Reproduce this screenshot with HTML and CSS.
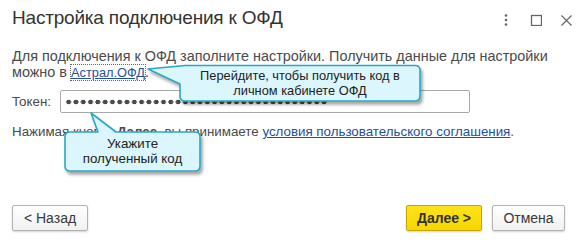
FILE: index.html
```html
<!DOCTYPE html>
<html lang="ru">
<head>
<meta charset="utf-8">
<title>Настройка подключения к ОФД</title>
<link rel="stylesheet" href="styles.css">
</head>
<body>
<div class="dialog">
  <div class="header">
    <div class="title">Настройка подключения к ОФД</div>
    <div class="win-icons">
      <svg class="ico" width="12" height="12" viewBox="0 0 12 12"><circle cx="6" cy="1.5" r="1.3" fill="#666"/><circle cx="6" cy="6" r="1.3" fill="#666"/><circle cx="6" cy="10.5" r="1.3" fill="#666"/></svg>
      <svg class="ico" width="12" height="12" viewBox="0 0 12 12"><rect x="1.5" y="1.5" width="10" height="10" fill="none" stroke="#666" stroke-width="1.3"/></svg>
      <svg class="ico" width="12" height="12" viewBox="0 0 12 12"><path d="M1.5 1.5 L11.5 11.5 M11.5 1.5 L1.5 11.5" stroke="#666" stroke-width="1.2" fill="none"/></svg>
    </div>
  </div>
  <div class="content">
    <p class="intro">Для подключения к ОФД заполните настройки. Получить данные для настройки можно в <a class="link focused" href="#">Астрал.ОФД</a>.</p>
    <div class="token-row">
      <span class="label">Токен:</span>
      <div class="field"><span class="dots"></span></div>
    </div>
    <p class="terms">Нажимая кнопку <b>Далее</b>, вы принимаете <a class="link" href="#">условия пользовательского соглашения</a>.</p>
  </div>
  <div class="footer">
    <button class="btn">&lt; Назад</button>
    <div class="right-btns">
      <button class="btn btn-primary">Далее &gt;</button>
      <button class="btn btn-cancel">Отмена</button>
    </div>
  </div>

  <div class="callout callout-1">
    <svg class="callout-bg" width="290" height="50" viewBox="0 0 290 50">
      <defs><filter id="sh1" x="-10%" y="-20%" width="120%" height="150%"><feDropShadow dx="2" dy="3" stdDeviation="1.5" flood-color="#000" flood-opacity="0.35"/></filter></defs>
      <path d="M3 7 L40 3.5 H270 Q275 3.5 275 8.5 V34 Q275 39 270 39 H40 Q35 39 35 34 V22 Z" fill="#dbf6fc" stroke="#2ba6c6" stroke-width="1.6" stroke-linejoin="round" filter="url(#sh1)"/>
    </svg>
    <div class="callout-text">Перейдите, чтобы получить код в<br>личном кабинете ОФД</div>
  </div>

  <div class="callout callout-2">
    <svg class="callout-bg" width="150" height="72" viewBox="0 0 150 72">
      <defs><filter id="sh2" x="-10%" y="-10%" width="130%" height="130%"><feDropShadow dx="2" dy="3" stdDeviation="1.5" flood-color="#000" flood-opacity="0.35"/></filter></defs>
      <path d="M31 5 L56 24 H135 Q140 24 140 29 V58 Q140 63 135 63 H10 Q5 63 5 58 V29 Q5 24 10 24 H38 Z" fill="#dbf6fc" stroke="#2ba6c6" stroke-width="1.6" stroke-linejoin="round" filter="url(#sh2)"/>
    </svg>
    <div class="callout-text">Укажите<br>полученный код</div>
  </div>
</div>
</body>
</html>
```

FILE: styles.css
```css
* { box-sizing: border-box; }
html, body { margin: 0; padding: 0; background: #fff; }
body { width: 585px; height: 244px; overflow: hidden; font-family: "Liberation Sans", Arial, sans-serif; color: #4a4a4a; }

.dialog { position: relative; width: 585px; height: 244px; display: flex; flex-direction: column; }

.header { display: flex; justify-content: space-between; align-items: flex-start; padding: 6px 12px 0 12px; }
.title { font-size: 19px; letter-spacing: -0.2px; line-height: 24px; color: #333; }
.win-icons { display: flex; gap: 18px; padding-top: 8px; padding-right: 1px; }
.ico { display: block; }

.content { padding: 0 12px; font-size: 13.33px; line-height: 16px; }
.intro { margin: 18px 0 0 0; font-size: 14.4px; line-height: 16px; }
.intro .link { font-size: 12.8px; }
.link { color: #23509e; text-decoration: underline; }
.focused { outline: 1px dotted #666; outline-offset: 0; }

.token-row { display: flex; align-items: center; margin-top: 9px; }
.label { width: 48px; }
.field { width: 410px; height: 23px; border: 1px solid #a9a9a9; border-radius: 2px; display: flex; align-items: center; padding-left: 4px; overflow: hidden; }
.dots { display: block; width: 263px; height: 6px; background: radial-gradient(circle, #4a4a4a 2.2px, transparent 2.6px) 0 0 / 7.3px 6px repeat-x; }

.terms { margin: 11px 0 0 0; }
.terms b { font-weight: bold; }

.footer { margin-top: auto; display: flex; justify-content: space-between; padding: 0 20px 13px 12px; }
.right-btns { display: flex; gap: 10px; }
.btn { height: 26px; width: 76px; font-family: "Liberation Sans", Arial, sans-serif; font-size: 14px; color: #3a3a3a; border: 1px solid #b3b3b3; border-radius: 2px; background: linear-gradient(#ffffff, #f1f1f1); box-shadow: 0 1px 2px rgba(0,0,0,0.18); padding: 0; }
.btn-primary { background: linear-gradient(#ffe31a, #f7d600); border-color: #c6a600; font-weight: bold; color: #333; }
.btn-cancel { width: 73px; }

.callout { position: absolute; }
.callout-bg { position: absolute; left: 0; top: 0; }
.callout-text { text-align: center; font-size: 12.8px; line-height: 15px; color: #222; }
.callout-1 { left: 145px; top: 62px; width: 290px; height: 50px; }
.callout-1 .callout-text { position: absolute; left: 35px; top: 6px; width: 240px; }
.callout-2 { left: 60px; top: 108px; width: 150px; height: 72px; }
.callout-2 .callout-text { position: absolute; left: 5px; top: 28px; width: 135px; font-size: 13.33px; }
```
